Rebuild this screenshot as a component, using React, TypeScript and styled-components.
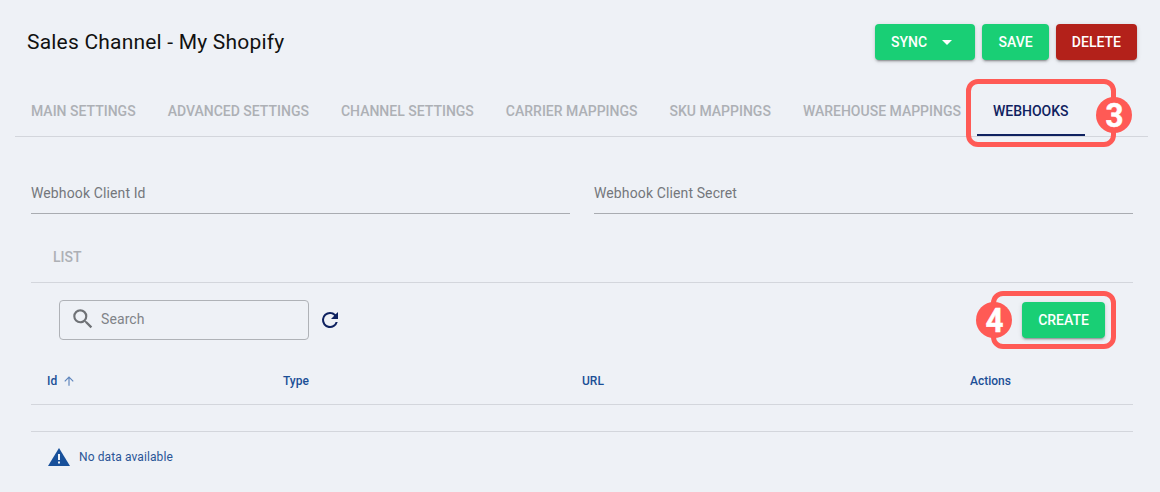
import React from 'react';
import styled, { createGlobalStyle } from 'styled-components';

const GlobalStyle = createGlobalStyle`
    html, body {
        margin: 0;
        background: #eef1f6;
        font-family: Roboto, "Liberation Sans", sans-serif;
    }
`;

const Page = styled.div`
    position: relative;
    width: 1160px;
    height: 492px;
    overflow: hidden;
    background: #eef1f6;
`;

const Header = styled.header`
    display: flex;
    justify-content: space-between;
    align-items: center;
    height: 36px;
    padding: 24px 23px 0 27px;
`;

const Title = styled.h1`
    margin: 0;
    font-size: 21px;
    font-weight: 400;
    letter-spacing: 0.2px;
    color: #111;
`;

const Actions = styled.div`
    display: flex;
    gap: 7px;
`;

const Button = styled.button<{ $danger?: boolean; $w: number }>`
    display: flex;
    align-items: center;
    justify-content: center;
    width: ${p => p.$w}px;
    height: 36px;
    padding: 0;
    border: none;
    border-radius: 4px;
    background: ${p => (p.$danger ? '#b3211a' : '#19cf75')};
    color: #fff;
    font-family: inherit;
    font-size: 14px;
    font-weight: 500;
    box-shadow: 0 3px 1px -2px rgba(0,0,0,.2), 0 2px 2px 0 rgba(0,0,0,.14), 0 1px 5px 0 rgba(0,0,0,.12);
`;

const SyncButton = styled(Button)`
    justify-content: flex-start;
    padding-left: 16px;
`;

const Caret = styled.span`
    width: 0;
    height: 0;
    margin-left: 15px;
    border-left: 5px solid transparent;
    border-right: 5px solid transparent;
    border-top: 5px solid #fff;
`;

const Tabs = styled.nav`
    display: flex;
    height: 50px;
    margin: 26px 12px 0 15px;
    border-bottom: 1px solid #d3d6dc;
`;

const Tab = styled.div<{ $active?: boolean }>`
    position: relative;
    display: flex;
    align-items: center;
    padding: 0 16px;
    font-size: 14px;
    font-weight: 500;
    white-space: nowrap;
    color: ${p => (p.$active ? '#0f2260' : '#adb0b5')};

    ${p => p.$active && `
        &::after {
            content: '';
            position: absolute;
            left: 0;
            right: 0;
            bottom: 0;
            height: 2px;
            background: #0f2260;
        }
    `}
`;

const Body = styled.main`
    padding: 0 27px 0 31px;
`;

const Fields = styled.div`
    display: grid;
    grid-template-columns: 539px 539px;
    gap: 24px;
    margin-top: 36px;
`;

const Field = styled.div`
    height: 41px;
    padding-top: 12px;
    box-sizing: border-box;
    border-bottom: 1px solid #a9acb1;
    font-size: 14px;
    line-height: 16px;
    letter-spacing: 0.12px;
    color: #74777c;
`;

const SubTabs = styled.div`
    display: flex;
    align-items: center;
    height: 69px;
    padding: 18px 22px 0;
    box-sizing: border-box;
    border-bottom: 1px solid #d3d6dc;
    font-size: 14px;
    font-weight: 500;
    color: #adb0b5;
`;

const Toolbar = styled.div`
    display: flex;
    align-items: center;
    justify-content: space-between;
    height: 40px;
    margin-top: 17px;
    padding: 0 28px 0 28px;
`;

const SearchGroup = styled.div`
    display: flex;
    align-items: center;
    gap: 9px;
`;

const SearchBox = styled.div`
    display: flex;
    align-items: center;
    gap: 5px;
    width: 250px;
    height: 40px;
    padding: 0 0 2px 10px;
    box-sizing: border-box;
    border: 1px solid #afb2b7;
    border-radius: 4px;
    font-size: 14px;
    letter-spacing: 0.1px;
    color: #808388;
`;

const HeaderRow = styled.div`
    display: grid;
    grid-template-columns: 236px 299px 388px 1fr;
    align-items: center;
    height: 64px;
    margin-top: 1px;
    padding: 16px 0 0 16px;
    box-sizing: border-box;
    border-bottom: 1px solid #d3d6dc;
`;

const HeaderCell = styled.div`
    display: flex;
    align-items: center;
    gap: 5px;
    font-size: 12px;
    font-weight: 500;
    color: #1b4f96;
`;

const EmptyRow = styled.div`
    height: 26px;
    border-bottom: 1px solid #d3d6dc;
`;

const Notice = styled.div`
    display: flex;
    align-items: center;
    gap: 9px;
    height: 50px;
    padding-left: 17px;
    font-size: 12px;
    letter-spacing: 0.1px;
    color: #2a5596;
`;

const Highlight = styled.div<{ $x: number; $y: number; $w: number; $h: number }>`
    position: absolute;
    left: ${p => p.$x}px;
    top: ${p => p.$y}px;
    width: ${p => p.$w}px;
    height: ${p => p.$h}px;
    box-sizing: border-box;
    border: 5px solid #ff5a55;
    border-radius: 12px;
    pointer-events: none;
`;

const Badge = styled.div<{ $x: number; $y: number }>`
    position: absolute;
    left: ${p => p.$x}px;
    top: ${p => p.$y}px;
    display: flex;
    align-items: center;
    justify-content: center;
    width: 36px;
    height: 36px;
    border-radius: 50%;
    background: #ff5a55;
    color: #fff;
    font-size: 33px;
    font-weight: 700;
`;

const Digit = styled.span`
    display: inline-block;
    transform: scaleX(0.95);
    -webkit-text-stroke: 0.5px #fff;
`;

const App = () => (
    <Page>
        <GlobalStyle />
        <Header>
            <Title>Sales Channel - My Shopify</Title>
            <Actions>
                <SyncButton $w={100.4}>SYNC<Caret /></SyncButton>
                <Button $w={66.4}>SAVE</Button>
                <Button $w={81.2} $danger>DELETE</Button>
            </Actions>
        </Header>
        <Tabs>
            <Tab>MAIN SETTINGS</Tab>
            <Tab>ADVANCED SETTINGS</Tab>
            <Tab>CHANNEL SETTINGS</Tab>
            <Tab>CARRIER MAPPINGS</Tab>
            <Tab>SKU MAPPINGS</Tab>
            <Tab>WAREHOUSE MAPPINGS</Tab>
            <Tab $active>WEBHOOKS</Tab>
        </Tabs>
        <Body>
            <Fields>
                <Field>Webhook Client Id</Field>
                <Field>Webhook Client Secret</Field>
            </Fields>
            <SubTabs>LIST</SubTabs>
            <Toolbar>
                <SearchGroup>
                    <SearchBox>
                        <svg width="26" height="26" viewBox="0 0 24 24" fill="#6f7276">
                            <path d="M15.5 14h-.79l-.28-.27A6.47 6.47 0 0 0 16 9.5 6.5 6.5 0 1 0 9.5 16c1.61 0 3.09-.59 4.23-1.57l.27.28v.79l5 4.99L20.49 19l-4.99-5zm-6 0C7.01 14 5 11.99 5 9.5S7.01 5 9.5 5 14 7.01 14 9.5 11.99 14 9.5 14z" />
                        </svg>
                        Search
                    </SearchBox>
                    <svg width="24" height="24" viewBox="0 0 24 24" fill="#0f2260">
                        <path d="M17.65 6.35A7.95 7.95 0 0 0 12 4a8 8 0 1 0 7.73 10h-2.08A6 6 0 1 1 12 6c1.66 0 3.14.69 4.22 1.78L13 11h7V4l-2.35 2.35z" />
                    </svg>
                </SearchGroup>
                <Button $w={83}>CREATE</Button>
            </Toolbar>
            <HeaderRow>
                <HeaderCell>
                    Id
                    <svg width="14" height="14" viewBox="0 0 24 24" fill="#5f86bd">
                        <path d="M4 12l1.41 1.41L11 7.83V20h2V7.83l5.58 5.59L20 12l-8-8-8 8z" />
                    </svg>
                </HeaderCell>
                <HeaderCell>Type</HeaderCell>
                <HeaderCell>URL</HeaderCell>
                <HeaderCell>Actions</HeaderCell>
            </HeaderRow>
            <EmptyRow />
            <Notice>
                <svg width="22" height="22" viewBox="0 0 22 22">
                    <path d="M11 2 L22 20 H0 Z" fill="#17509a" />
                    <rect x="10" y="8" width="2" height="6" fill="#eef1f6" />
                    <rect x="10" y="15.5" width="2" height="2" fill="#eef1f6" />
                </svg>
                No data available
            </Notice>
        </Body>
        <Highlight $x={966} $y={79} $w={150} $h={68} />
        <Badge $x={1096} $y={97}><Digit>3</Digit></Badge>
        <Highlight $x={991} $y={291} $w={125} $h={58} />
        <Badge $x={976} $y={302}><Digit>4</Digit></Badge>
    </Page>
);

export default App;
